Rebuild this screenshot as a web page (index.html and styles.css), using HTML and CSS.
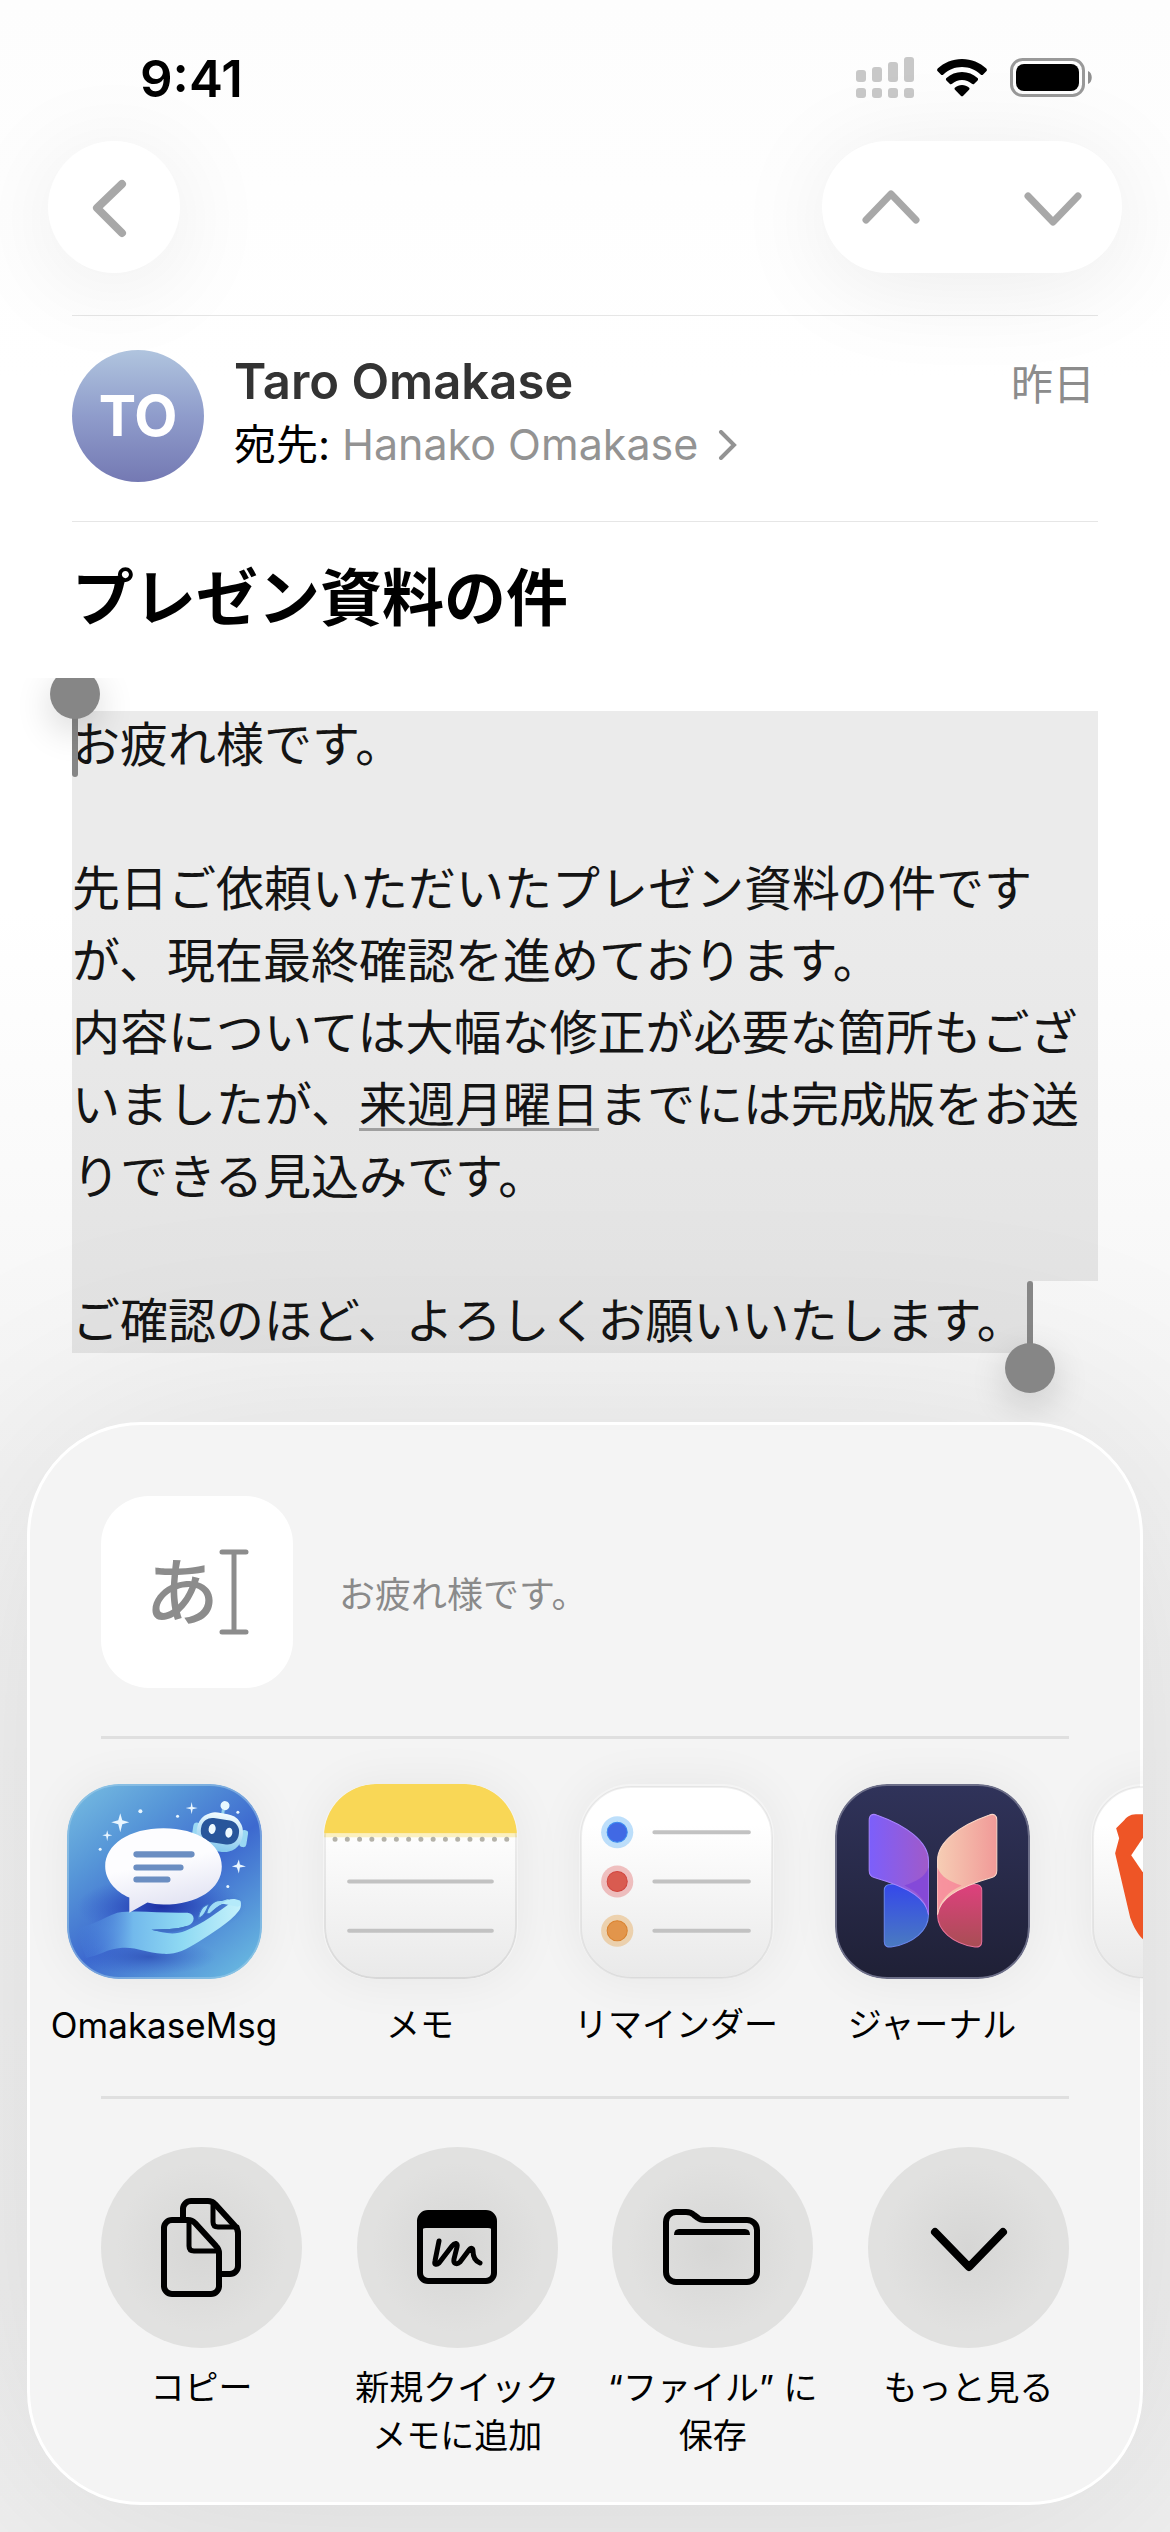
FILE: index.html
```html
<!DOCTYPE html>
<html lang="ja">
<head>
    <meta charset="UTF-8">
    <meta name="viewport" content="width=device-width, initial-scale=1.0">
    <title>プレゼン資料の件</title>
    <link rel="stylesheet" href="styles.css">
</head>
<body>
    <div class="status-bar">
        <span class="time">9:41</span>
        <div class="status-icons">
            <svg class="signal" width="58" height="42" viewBox="0 0 58 42">
                <rect x="0" y="13" width="10" height="12" rx="3"/>
                <rect x="16" y="10" width="10" height="15" rx="3"/>
                <rect x="32" y="5" width="10" height="20" rx="3"/>
                <rect x="48" y="0" width="10" height="25" rx="3"/>
                <rect x="0" y="31" width="10" height="10" rx="3"/>
                <rect x="16" y="31" width="10" height="10" rx="3"/>
                <rect x="32" y="31" width="10" height="10" rx="3"/>
                <rect x="48" y="31" width="10" height="10" rx="3"/>
            </svg>
            <svg class="wifi" width="50" height="38" viewBox="0 0 50 38">
                <path d="M25 0c9.500 0 18 3.500 24.300 9.600.8.800.8 1.800 0 2.600l-3.200 3.200c-.7.700-1.700.7-2.500 0C38.500 10.700 32.100 8 25 8S11.500 10.700 6.400 15.400c-.8.700-1.800.7-2.500 0L.7 12.200c-.8-.8-.8-1.800 0-2.600C7 3.500 15.500 0 25 0z"/>
                <path d="M25 13c5.900 0 11.300 2.200 15.500 5.900.8.700.8 1.700.1 2.500l-3.300 3.300c-.7.700-1.600.7-2.400.1C32.200 22.400 28.800 21 25 21s-7.200 1.400-9.900 3.800c-.8.600-1.700.6-2.400-.1l-3.300-3.300c-.7-.8-.7-1.800.1-2.500C13.700 15.200 19.100 13 25 13z"/>
                <path d="M25 26c2.600 0 5 .9 6.900 2.400.8.700.8 1.600.1 2.400l-5.800 5.900c-.7.700-1.700.7-2.400 0L18 30.800c-.7-.8-.7-1.700.1-2.400C20 26.900 22.400 26 25 26z"/>
            </svg>
            <svg class="battery" width="83" height="40" viewBox="0 0 83 40">
                <rect x="1.500" y="1.500" width="72" height="36" rx="11" fill="none" stroke="#999" stroke-width="3"/>
                <rect x="6" y="6" width="63" height="27" rx="8"/>
                <path d="M78 13c5 2 5 11 0 13z" fill="#8f8f8f"/>
            </svg>
        </div>
    </div>

    <nav class="nav-bar">
        <button class="nav-button back-button" aria-label="戻る">
            <svg width="132" height="132" viewBox="0 0 132 132"><path d="M74 43L49 67l25 25" stroke-width="8"/></svg>
        </button>
        <div class="nav-group">
            <button class="nav-button" aria-label="前のメッセージ">
                <svg width="138" height="132" viewBox="0 0 138 132"><path d="M44 79l25-26 25 26" stroke-width="7"/></svg>
            </button>
            <button class="nav-button" aria-label="次のメッセージ">
                <svg width="138" height="132" viewBox="0 0 138 132"><path d="M44 55l25 26 25-26" stroke-width="7"/></svg>
            </button>
        </div>
    </nav>

    <header class="mail-header">
        <div class="avatar">TO</div>
        <div class="people">
            <p class="sender">Taro Omakase</p>
            <p class="recipient">宛先: <a class="recipient-link" href="#">Hanako Omakase
                <svg width="20" height="30" viewBox="0 0 20 30"><path d="M3 2l13 13L3 28"/></svg></a></p>
        </div>
        <time class="date">昨日</time>
    </header>

    <h1 class="subject">プレゼン資料の件</h1>

    <main class="mail-body">
        <div class="selected-block">
            <p>お疲れ様です。</p>
            <br>
            <p>先日ご依頼いただいたプレゼン資料の件ですが、現在最終確認を進めております。</p>
            <p>内容については大幅な修正が必要な箇所もございましたが、<span class="detected-date">来週月曜日</span>までには完成版をお送りできる見込みです。</p>
            <br>
            <span class="handle handle-start"></span>
        </div>
        <p class="selected-line">ご確認のほど、よろしくお願いいたします。<span class="handle handle-end"></span></p>
    </main>

    <section class="share-sheet">
        <div class="preview">
            <div class="preview-tile">
                <span>あ</span>
                <svg width="30" height="86" viewBox="0 0 30 86"><path d="M3 3h24M3 83h24M15 3v80"/></svg>
            </div>
            <p class="preview-text">お疲れ様です。</p>
        </div>

        <div class="apps">
            <button class="app">
                <svg class="app-icon" viewBox="0 0 194 194">
                    <defs>
                        <linearGradient id="msgBg" x1="0" y1="0" x2=".8" y2="1">
                            <stop offset="0" stop-color="#79bfe2"/>
                            <stop offset=".3" stop-color="#5797d8"/>
                            <stop offset=".6" stop-color="#3d69cf"/>
                            <stop offset="1" stop-color="#65b2df"/>
                        </linearGradient>
                        <radialGradient id="msgGlow">
                            <stop offset="0" stop-color="#1d30a4"/>
                            <stop offset="1" stop-color="#2f52c8" stop-opacity="0"/>
                        </radialGradient>
                        <linearGradient id="bubble" x1="0" y1="0" x2=".3" y2="1">
                            <stop offset=".5" stop-color="#fdfdff"/>
                            <stop offset="1" stop-color="#e3e4f3"/>
                        </linearGradient>
                        <linearGradient id="hand">
                            <stop offset="0" stop-color="#4279d9" stop-opacity="0"/>
                            <stop offset=".35" stop-color="#72b9ec"/>
                            <stop offset=".65" stop-color="#8fdaf3"/>
                            <stop offset="1" stop-color="#c5f1fb"/>
                        </linearGradient>
                        <linearGradient id="robot" x1="0" y1="0" x2="0" y2="1">
                            <stop offset="0" stop-color="#f2fbff"/>
                            <stop offset="1" stop-color="#83c8ed"/>
                        </linearGradient>
                    </defs>
                    <rect width="194" height="194" rx="52" fill="url(#msgBg)"/>
                    <ellipse cx="94" cy="122" rx="84" ry="30" fill="url(#msgGlow)"/>
                    <ellipse cx="82" cy="172" rx="66" ry="18" fill="url(#msgGlow)" opacity=".5"/>
                    <g fill="#e9f6ff">
                        <path d="M53 29l2 7 7 2-7 2-2 8-2-8-7-2 7-2z"/>
                        <path d="M40 46l1 4 4 1-4 1-1 5-1-5-4-1 4-1z"/>
                        <path d="M124 18l1 5 5 1-5 1-1 5-1-5-5-1 5-1z"/>
                        <path d="M171 75l1 5 6 2-6 1-1 6-2-6-5-1 5-2z"/>
                        <circle cx="73" cy="27" r="2"/>
                        <circle cx="110" cy="32" r="1.500"/>
                        <circle cx="33" cy="65" r="1.500"/>
                        <circle cx="160" cy="102" r="1.500"/>
                        <circle cx="170" cy="28" r="1.500"/>
                    </g>
                    <g transform="rotate(9 152 48)">
                        <path d="M152 25v7" stroke="#8fd0f0" stroke-width="3"/>
                        <circle cx="153" cy="21" r="4.500" fill="#e8f8ff"/>
                        <rect x="125" y="42" width="8" height="17" rx="4" fill="#9ad8f3"/>
                        <rect x="173" y="42" width="7" height="17" rx="3" fill="#9ad8f3"/>
                        <rect x="129" y="29" width="46" height="38" rx="18" fill="url(#robot)"/>
                        <rect x="133" y="35" width="38" height="24" rx="11" fill="#28569b"/>
                        <ellipse cx="144" cy="46" rx="3.500" ry="5" fill="#eefaff"/>
                        <ellipse cx="161" cy="47" rx="3.500" ry="5" fill="#eefaff"/>
                    </g>
                    <path d="M8 143c16-1 28-10 42-15 22-3 44 1 70 0 8 1 8 10 0 13-12 4-24 3-36 4 12 3 22 6 34 1 16-6 34-20 47-29 8-3 10 4 6 9-9 12-27 22-40 31-14 9-24 13-36 12-16-1-26-7-40-6-16 1-22 8-36 10z" fill="url(#hand)"/>
                    <path d="M84 145c12-1 24 0 36-4-4 6-22 8-36 4z" fill="#3f6fc4"/>
                    <path d="M131 134c0-7 4-13 10-14-2 5-3 8-6 11zM139 129c1-7 7-14 15-13l6-2c3 1 2 3-3 5-7 2-10 6-15 10z" fill="#9fdcf5" stroke="#3f74cb" stroke-width="1"/>
                    <path d="M154 119c6-5 12-6 18-3 2 2 1 6-2 6" fill="#b4eafa"/>
                    <path d="M96 44c34 0 58 16 58 38s-24 38-58 38c-6 0-11-1-16-2l-18 10v-15c-14-6-24-18-24-31 0-22 24-38 58-38z" fill="url(#bubble)"/>
                    <path d="M69 70h55M69 83h44M69 95h31" stroke="#6b8ec2" stroke-width="6" stroke-linecap="round"/>
                    <rect x="1" y="1" width="192" height="192" rx="51" fill="none" stroke="#a6d0ea" stroke-opacity=".5" stroke-width="2"/>
                </svg>
                <span class="app-name-latin">OmakaseMsg</span>
            </button>
            <button class="app">
                <svg class="app-icon" viewBox="0 0 194 194">
                    <defs>
                        <linearGradient id="paper" x1="0" y1="0" x2="0" y2="1">
                            <stop offset=".2" stop-color="#fff"/>
                            <stop offset="1" stop-color="#e9e9e9"/>
                        </linearGradient>
                        <clipPath id="notesClip"><rect x="1" y="0" width="192" height="194" rx="52"/></clipPath>
                    </defs>
                    <g clip-path="url(#notesClip)">
                        <rect width="194" height="194" fill="url(#paper)"/>
                        <rect y="49" width="194" height="4" fill="#fbf0c0"/>
                        <rect x="2" y="1" width="190" height="192" rx="51" fill="none" stroke="#000" stroke-opacity=".07" stroke-width="2"/>
                        <rect width="194" height="49" fill="#f9d756"/>
                    </g>
                    <path d="M12 55h172" stroke="#b4b2a9" stroke-width="5" stroke-linecap="round" stroke-dasharray="0 12.200"/>
                    <path d="M26 97h142M26 146h142" stroke="#c2c2c2" stroke-width="4" stroke-linecap="round"/>
                </svg>
                <span>メモ</span>
            </button>
            <button class="app">
                <svg class="app-icon" viewBox="0 0 194 194">
                    <rect x="2" y="3" width="190" height="190" rx="50" fill="url(#paper)" stroke="#000" stroke-opacity=".06" stroke-width="2"/>
                    <g fill-opacity=".4">
                        <circle cx="38" cy="48" r="16" fill="#5aaef5"/>
                        <circle cx="38" cy="97" r="16" fill="#e06a68"/>
                        <circle cx="38" cy="146" r="16" fill="#e6a24c"/>
                    </g>
                    <circle cx="38" cy="48" r="10" fill="#4169e4" stroke="#3b8cf0" stroke-width="1"/>
                    <circle cx="38" cy="97" r="10" fill="#d95b50" stroke="#d1453f" stroke-width="1"/>
                    <circle cx="38" cy="146" r="10" fill="#e2954b" stroke="#d9822f" stroke-width="1"/>
                    <path d="M75 48h94M75 97h94M75 146h94" stroke="#c2c2c2" stroke-width="4" stroke-linecap="round"/>
                </svg>
                <span>リマインダー</span>
            </button>
            <button class="app">
                <svg class="app-icon" viewBox="0 0 194 194">
                    <defs>
                        <linearGradient id="night" x1="0" y1="0" x2="0" y2="1">
                            <stop offset="0" stop-color="#30335a"/>
                            <stop offset="1" stop-color="#1f2036"/>
                        </linearGradient>
                        <linearGradient id="wingPurple">
                            <stop offset="0" stop-color="#7c5ffb"/>
                            <stop offset="1" stop-color="#a05ac9"/>
                        </linearGradient>
                        <linearGradient id="wingPeach">
                            <stop offset="0" stop-color="#f6cdb4"/>
                            <stop offset="1" stop-color="#f19a98"/>
                        </linearGradient>
                        <linearGradient id="wingBlue" x1="0" y1="0" x2="0" y2="1">
                            <stop offset="0" stop-color="#3446ec"/>
                            <stop offset="1" stop-color="#4a7bc0"/>
                        </linearGradient>
                        <linearGradient id="wingRed" x1="0" y1="0" x2="0" y2="1">
                            <stop offset="0" stop-color="#e0407f"/>
                            <stop offset="1" stop-color="#a84e54"/>
                        </linearGradient>
                    </defs>
                    <rect x="1" y="1" width="192" height="192" rx="51" fill="url(#night)" stroke="#6c6e88" stroke-width="2"/>
                    <path d="M49 106c0-4 2-6 6-6l15-2c14 6 23 18 23 32 0 16-15 28-36 32-5 1-8-1-8-5z" fill="url(#wingBlue)" stroke="#6a86ee" stroke-width="1"/>
                    <path d="M146 106c0-4-2-6-6-6l-15-2c-14 6-23 18-23 32 0 16 15 28 36 32 5 1 8-1 8-5z" fill="url(#wingRed)" stroke="#e8719b" stroke-width="1"/>
                    <path d="M34 36c0-5 3-7 8-5 28 10 51 26 51 45v54c-2-15-16-26-54-37-4-1-5-3-5-7z" fill="url(#wingPurple)" stroke="#a884ff" stroke-width="1"/>
                    <path d="M161 36c0-5-3-7-8-5-28 10-51 26-51 45v54c2-15 16-26 54-37 4-1 5-3 5-7z" fill="url(#wingPeach)" stroke="#fbd8c8" stroke-width="1"/>
                    <path d="M93 83c-3 9-12 14-24 18 13 6 22 15 24 28z" fill="#7f45d9" fill-opacity=".8"/>
                    <path d="M102 83c3 9 12 14 24 18-13 6-22 15-24 28z" fill="#f78499" fill-opacity=".8"/>
                </svg>
                <span>ジャーナル</span>
            </button>
            <button class="app" aria-label="次のアプリ">
                <svg class="app-icon" viewBox="0 0 194 194">
                    <rect x="2" y="3" width="190" height="190" rx="50" fill="url(#paper)" stroke="#000" stroke-opacity=".06" stroke-width="2"/>
                    <path d="M47 30h100c7 0 10 1 14 6l8 8-3 10 4 15-15 64c-5 13-9 19-19 27l-39 24-39-24c-10-8-14-14-19-27L24 69l4-15-3-10 8-8c4-5 7-6 14-6z" fill="#ee5526"/>
                    <path d="M97 34L54 50 40 71l11 16 46 53 46-53 11-16-14-21z" fill="#fff"/>
                </svg>
            </button>
        </div>

        <div class="actions">
            <button class="action">
                <svg class="action-icon" viewBox="0 0 201 201">
                    <path d="M71 73H87c3 0 5 1 7 3l21 23c2 2 3 4 3 7v33a8 8 0 0 1-8 8H71a8 8 0 0 1-8-8V81a8 8 0 0 1 8-8z"/>
                    <path d="M88 74v25q0 5 5 5h24" stroke-width="5"/>
                    <path d="M82 71v-9a8 8 0 0 1 8-8h17c3 0 5 1 7 3l20 22c2 2 3 4 3 7v33a8 8 0 0 1-8 8H120"/>
                    <path d="M112 55v20q0 5 5 5h19" stroke-width="5"/>
                </svg>
                <span>コピー</span>
            </button>
            <button class="action">
                <svg class="action-icon" viewBox="0 0 201 201">
                    <rect x="63" y="66" width="74" height="68" rx="8"/>
                    <path d="M63 85v-9q0-10 10-10h54q10 0 10 10v9q-2-4-6-4H69q-4 0-6 4z" fill="#000" stroke="none"/>
                    <path d="M64 68h72v10H64z" fill="#000" stroke="none"/>
                    <path d="M82 94l-4 20c-1 4 2 4 4 2l13-17c3-4 6-3 5 1l-3 12c-1 5 3 6 6 3l9-12c2-3 4-2 4 1 0 6 2 10 7 12" stroke-width="5"/>
                </svg>
                <span>新規クイック<br>メモに追加</span>
            </button>
            <button class="action">
                <svg class="action-icon" viewBox="0 0 201 201">
                    <path d="M54 75a10 10 0 0 1 10-10h10c4 0 6 1 8 3l4 3c2 2 4 2 7 2h42a10 10 0 0 1 10 10v42a10 10 0 0 1-10 10H64a10 10 0 0 1-10-10z"/>
                    <path d="M62 88q0-6 5-6h66q5 0 5 6z" fill="#000" stroke="none"/>
                </svg>
                <span>“ファイル” に<br>保存</span>
            </button>
            <button class="action">
                <svg class="action-icon" viewBox="0 0 201 201"><path d="M67 85l34 35 34-35" stroke-width="8"/></svg>
                <span>もっと見る</span>
            </button>
        </div>
    </section>
</body>
</html>
```
FILE: styles.css
```css
* {
    box-sizing: border-box;
}

body {
    margin: 0;
    padding-bottom: 27px;
    font-family: Inter, "Noto Sans CJK JP", sans-serif;
    color: #000;
    background: linear-gradient(#fdfdfd 0%, #fff 15%, #fff 36%, #f4f4f4 58%, #f0f0f0 100%);
    overflow-x: hidden;
}

p, h1 {
    margin: 0;
}

button {
    padding: 0;
    border: none;
    background: none;
    font-family: inherit;
    color: inherit;
    cursor: pointer;
}

svg {
    display: block;
}

/* status bar */
.status-bar {
    display: flex;
    justify-content: space-between;
    align-items: center;
    height: 141px;
    padding: 15px 77px 0 140px;
}

.time {
    font-size: 51px;
    font-weight: 600;
}

.status-icons {
    display: flex;
    align-items: center;
    gap: 23px;
}

.signal {
    fill: #c8c8c8;
}

/* navigation */
.nav-bar {
    display: flex;
    justify-content: space-between;
    padding: 0 48px;
    margin-bottom: 42px;
}

.back-button, .nav-group {
    border-radius: 66px;
    background-color: #fff;
    box-shadow: 0 12px 100px rgba(0, 0, 0, 0.08);
}

.nav-group {
    display: flex;
    gap: 24px;
}

.nav-button path {
    fill: none;
    stroke: #a8a8a8;
    stroke-linecap: round;
    stroke-linejoin: round;
}

/* mail header */
.mail-header {
    display: flex;
    gap: 30px;
    margin: 0 72px;
    padding: 34px 0 39px;
    border-top: 1px solid #e6e6e6;
    border-bottom: 1px solid #e6e6e6;
}

.avatar {
    display: flex;
    justify-content: center;
    align-items: center;
    width: 132px;
    height: 132px;
    border-radius: 50%;
    font-size: 56px;
    font-weight: 700;
    color: #fff;
    background: linear-gradient(#b0c4de, #8f9ccb 50%, #7479b3);
}

.people {
    flex: 1;
}

.sender {
    font-size: 49px;
    font-weight: 600;
    line-height: 64px;
    color: #333;
}

.recipient {
    font-size: 42px;
    line-height: 60px;
}

.recipient-link {
    font-size: 43px;
    color: #939393;
    text-decoration: none;
}

.recipient-link svg {
    display: inline-block;
    margin-left: 8px;
    fill: none;
    stroke: #939393;
    stroke-width: 4;
    stroke-linecap: round;
}

.date {
    padding-right: 3px;
    font-family: "Noto Sans CJK JP", sans-serif;
    font-size: 42px;
    line-height: 64px;
    color: #8c8c8c;
}

.subject {
    padding: 28px 72px 40px;
    font-family: "Noto Sans CJK JP", sans-serif;
    font-size: 62px;
    font-weight: 700;
    line-height: 88px;
}

/* selected text */
.mail-body {
    padding: 33px 72px 69px;
    font-family: "Noto Sans CJK JP", sans-serif;
    font-size: 48px;
    line-height: 72px;
    color: #141414;
    overflow: hidden;
}

.selected-block {
    display: flow-root;
    position: relative;
    background-color: rgba(0, 0, 0, 0.08);
}

.selected-block p:first-child {
    margin-top: -6px;
}

.selected-line {
    display: table;
    position: relative;
    padding-right: 8px;
    background-color: rgba(0, 0, 0, 0.08);
}

.detected-date {
    text-decoration: underline;
    text-decoration-color: #a0a0a0;
    text-decoration-thickness: 3px;
    text-underline-offset: 6px;
}

/* grab handles over the ends of the selection */
.handle {
    position: absolute;
    width: 6px;
    border-radius: 3px;
    background-color: #868686;
}

.handle::after {
    content: "";
    position: absolute;
    left: -22px;
    width: 50px;
    height: 50px;
    border-radius: 50%;
    background-color: #868686;
    box-shadow: 0 12px 36px rgba(0, 0, 0, 0.16);
}

.handle-start {
    left: 0;
    top: 0;
    height: 66px;
}

.handle-start::after {
    top: -42px;
}

.handle-end {
    right: 0;
    top: 0;
    height: 72px;
}

.handle-end::after {
    bottom: -40px;
}

/* share sheet */
.share-sheet {
    margin: 0 27px;
    padding: 71px 0 42px;
    border: 3px solid #fff;
    border-radius: 114px;
    background-color: #f4f4f4;
    box-shadow: 0 10px 300px rgba(0, 0, 0, 0.11);
}

.preview {
    display: flex;
    align-items: center;
    gap: 46px;
    margin: 0 71px;
    padding-bottom: 48px;
    border-bottom: 3px solid #dfdfdf;
}

.preview-tile {
    display: flex;
    justify-content: center;
    align-items: center;
    width: 192px;
    height: 192px;
    border-radius: 48px;
    background-color: #fff;
    font-size: 74px;
    font-weight: 500;
    line-height: 86px;
    color: #8c8c8c;
}

.preview-tile path {
    fill: none;
    stroke: #8c8c8c;
    stroke-width: 5;
    stroke-linecap: round;
}

.preview-text {
    font-family: "Noto Sans CJK JP", sans-serif;
    font-size: 36px;
    line-height: 48px;
    color: #8a8a8a;
}

.apps {
    display: flex;
    margin: 0 -3px;
    padding: 45px 0 47px 9px;
    overflow: hidden;
}

.app {
    display: flex;
    flex-direction: column;
    align-items: center;
    gap: 22px;
    flex: 0 0 256px;
    font-size: 34px;
    line-height: 48px;
}

.app-name-latin {
    font-size: 35px;
}

.app-icon {
    width: 195px;
    height: 195px;
    border-radius: 52px;
    box-shadow: 0 0 50px rgba(0, 0, 0, 0.06);
}

.actions {
    display: flex;
    justify-content: space-between;
    align-items: flex-start;
    margin: 0 71px;
    padding-top: 48px;
    border-top: 3px solid #dfdfdf;
}

.action {
    display: flex;
    flex-direction: column;
    align-items: center;
    gap: 16px;
    width: 201px;
    font-size: 34px;
    line-height: 48px;
    white-space: nowrap;
}

.action-icon {
    width: 201px;
    height: 201px;
    border-radius: 50%;
    background: radial-gradient(#d6d6d5, #e1e1e0 60%);
    fill: none;
    stroke: #000;
    stroke-width: 6;
    stroke-linecap: round;
    stroke-linejoin: round;
}
```
